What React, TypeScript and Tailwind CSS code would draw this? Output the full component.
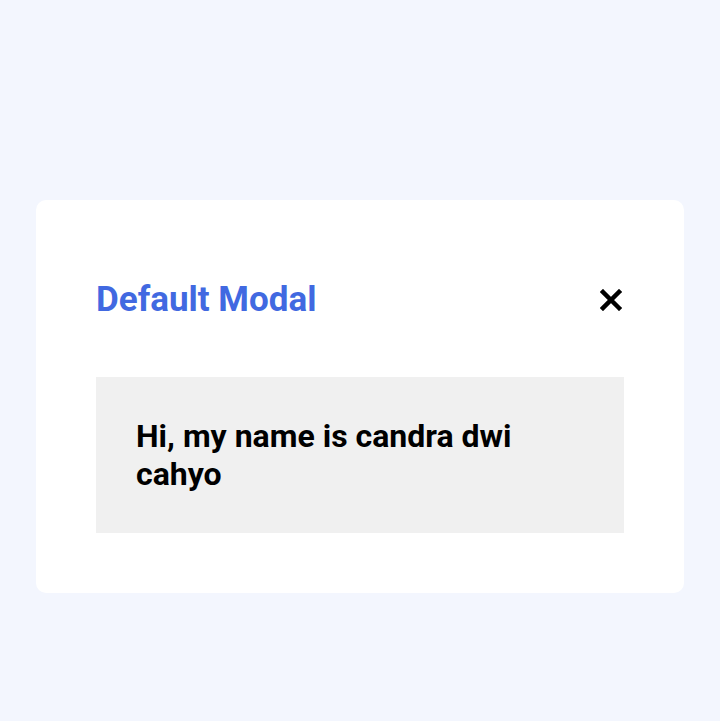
export default function App() {
  return (
    <div className="min-h-[721px] w-full bg-[#f3f6fe] px-[36px] pt-[200px] font-['Roboto',sans-serif]">
      <div className="rounded-[10px] bg-white px-[60px] pt-[74px] pb-[60px]">
        <div className="flex items-center justify-between">
          <h2 className="text-[35px] font-bold text-[#4169e1]">Default Modal</h2>
          <button className="mr-[2px] text-black" aria-label="Close">
            <svg width="22" height="22" viewBox="0 0 22 22">
              <path d="M3 3 L19 19 M19 3 L3 19" stroke="currentColor" strokeWidth="4.5" strokeLinecap="square" />
            </svg>
          </button>
        </div>
        <div className="mt-[50px] bg-[#f0f0f0] px-[40px] pt-[40px] pb-[40px]">
          <p className="text-[32px] leading-[38px] font-bold text-black">
            Hi, my name is candra dwi cahyo
          </p>
        </div>
      </div>
    </div>
  );
}
